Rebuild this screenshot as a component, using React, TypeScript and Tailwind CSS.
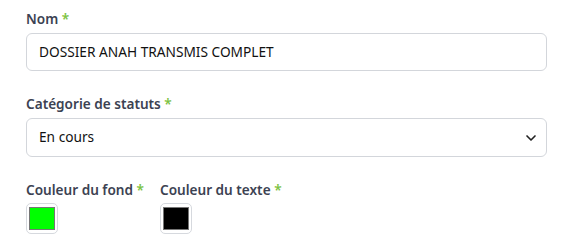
import { ChevronDown } from "lucide-react";

function Label({ text }: { text: string }) {
  return (
    <label className="block text-[13.6px] leading-[21px] font-semibold text-[#3c4252]">
      {text} <span className="text-[#7cc242]">*</span>
    </label>
  );
}

function Swatch({ color }: { color: string }) {
  return (
    <div className="w-[32px] h-[31px] rounded-[5px] border border-[#d6d9de] bg-white flex items-center justify-center">
      <div className="w-[26px] h-[23px] border border-[#767676]" style={{ background: color }} />
    </div>
  );
}

export default function App() {
  return (
    <div className="w-[569px] h-[247px] bg-white pl-[26px] pr-[22px] pt-[8px]" style={{ fontFamily: '"Noto Sans", sans-serif' }}>
      <div className="mb-[22px]">
        <Label text="Nom" />
        <div className="mt-[4px] h-[38px] rounded-[6px] border border-[#d3d6db] flex items-center px-[12px] text-[13.7px] text-[#111]">
          DOSSIER ANAH TRANSMIS COMPLET
        </div>
      </div>

      <div className="mb-[22px]">
        <Label text="Catégorie de statuts" />
        <div className="mt-[4px] h-[39px] rounded-[6px] border border-[#d3d6db] flex items-center justify-between pl-[12px] pr-[7px] text-[13.7px] text-[#111]">
          <span>En cours</span>
          <ChevronDown size={16} strokeWidth={2.5} className="text-[#222]" />
        </div>
      </div>

      <div className="flex gap-[16px]">
        <div>
          <Label text="Couleur du fond" />
          <div className="mt-[3px]">
            <Swatch color="#00ff00" />
          </div>
        </div>
        <div>
          <Label text="Couleur du texte" />
          <div className="mt-[3px]">
            <Swatch color="#000000" />
          </div>
        </div>
      </div>
    </div>
  );
}
